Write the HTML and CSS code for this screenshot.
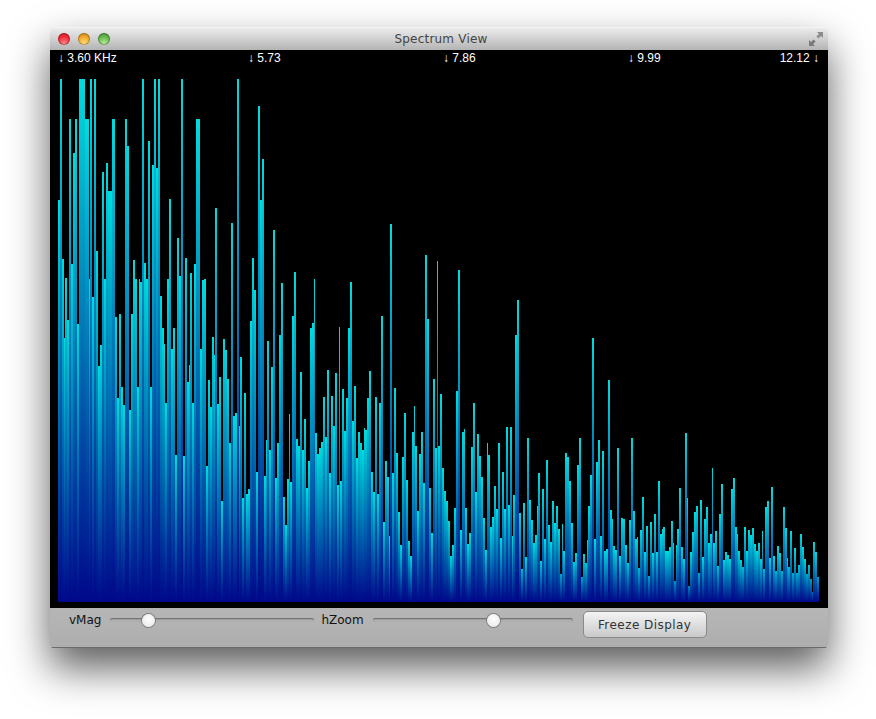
FILE: index.html
```html
<!DOCTYPE html>
<html lang="en">
<head>
    <meta charset="UTF-8">
    <meta name="viewport" content="width=device-width, initial-scale=1.0">
    <title>Spectrum View</title>
    <link rel="stylesheet" href="styles.css">
</head>
<body>
    <div class="window">
        <header class="titlebar">
            <div class="lights">
                <span class="light red"></span>
                <span class="light yellow"></span>
                <span class="light green"></span>
            </div>
            <h1>Spectrum View</h1>
            <svg class="fullscreen" width="16" height="16" viewBox="0 0 16 16">
                <path d="M9 1h6v6l-2-2-2.6 2.6-2-2L11 3z" fill="#8c8c8c"/>
                <path d="M1 15V9l2 2 2.6-2.6 2 2L5 13l2 2z" fill="#7a7a7a"/>
            </svg>
        </header>

        <div class="scope">
            <div class="axis">
                <span>↓ 3.60 KHz</span>
                <span>↓ 5.73</span>
                <span>↓ 7.86</span>
                <span>↓ 9.99</span>
                <span class="axis-end">12.12 ↓</span>
            </div>
            <canvas id="spectrum" width="762" height="532"></canvas>
        </div>

        <div class="controls">
            <label class="vmag" for="vMag">vMag</label>
            <input class="slider vmag-slider" type="range" id="vMag" min="0" max="100" step="0.1" value="16.5">
            <label class="hzoom" for="hZoom">hZoom</label>
            <input class="slider hzoom-slider" type="range" id="hZoom" min="0" max="100" step="0.1" value="61.2">
            <button class="freeze">Freeze Display</button>
        </div>
    </div>

    <script src="script.js"></script>
</body>
</html>
```

FILE: styles.css
```css
html, body {
    height: 100%;
}

body {
    margin: 0;
    padding: 27px 0 0 50px;
    box-sizing: border-box;
    background-color: #ffffff;
    font-family: 'DejaVu Sans', sans-serif;
}

.window {
    width: 778px;
    height: 621px;
    display: flex;
    flex-direction: column;
    border-radius: 5px 5px 3px 3px;
    overflow: hidden;
    box-shadow: 0 20px 40px rgba(0, 0, 0, 0.64);
}

.titlebar {
    height: 23px;
    flex: none;
    display: grid;
    grid-template-columns: 1fr auto 1fr;
    align-items: center;
    padding: 0 4px 0 8px;
    background: linear-gradient(#ececec, #b4b4b4);
    border-top: 1px solid #f4f4f4;
    box-sizing: border-box;
}

.titlebar h1 {
    margin: 0;
    font-size: 12px;
    font-weight: normal;
    letter-spacing: 0.2px;
    color: #444;
}

.fullscreen {
    justify-self: end;
}

.lights {
    display: flex;
    gap: 8px;
}

.light {
    width: 12px;
    height: 12px;
    border-radius: 50%;
    box-shadow: inset 0 0 0 1px rgba(0, 0, 0, 0.25);
}

.red {
    background: radial-gradient(circle at 50% 85%, #ff8a8a, #ee2a38 55%, #c0141f);
}

.yellow {
    background: radial-gradient(circle at 50% 85%, #ffdc80, #f0a628 55%, #bd7a10);
}

.green {
    background: radial-gradient(circle at 50% 85%, #b6ec98, #67b64e 55%, #3f8a2e);
}

.scope {
    flex: 1;
    padding: 0 8px 6px;
    background-color: #000;
    display: flex;
    flex-direction: column;
}

.axis {
    height: 20px;
    display: grid;
    grid-template-columns: 190px 195px 185px 1fr 1fr;
    color: #fff;
    font-family: 'Liberation Sans', sans-serif;
    font-size: 12px;
    line-height: 16px;
}

.axis-end {
    grid-column: 5;
    justify-self: end;
    margin-right: 1px;
}

#spectrum {
    display: block;
    margin-top: auto;
    filter: blur(0.4px);
}

.controls {
    height: 40px;
    flex: none;
    box-sizing: border-box;
    padding-bottom: 15px;
    display: flex;
    align-items: center;
    background: linear-gradient(#b6b6b6, #aeaeae);
    border-bottom: 1px solid #6a6a6a;
    font-size: 12px;
    color: #111;
}

.vmag {
    margin-left: 19px;
}

.hzoom {
    margin-left: 7px;
}

.slider {
    -webkit-appearance: none;
    appearance: none;
    height: 13px;
    margin: 0 0 0 9px;
    background: transparent;
}

.slider::-webkit-slider-runnable-track {
    height: 4px;
    border-radius: 2px;
    background: linear-gradient(#7c7c7c, #d0d0d0);
    box-shadow: inset 0 0 0 1px rgba(0, 0, 0, 0.12);
}

.slider::-webkit-slider-thumb {
    -webkit-appearance: none;
    width: 13px;
    height: 13px;
    margin-top: -4.5px;
    border-radius: 50%;
    background: radial-gradient(circle at 50% 40%, #ffffff, #e4e4e4);
    box-shadow: 0 0 0 1px #7e7e7e;
}

.vmag-slider {
    width: 204px;
}

.hzoom-slider {
    width: 200px;
}

.freeze {
    width: 124px;
    height: 27px;
    flex: none;
    margin: 9px 0 0 10px;
    padding: 0;
    border: 1px solid #8a8a8a;
    border-radius: 5px;
    background: linear-gradient(#f4f4f4, #c9c9c9);
    font-family: inherit;
    font-size: 12px;
    letter-spacing: 0.45px;
    color: #333;
}
```

FILE: script.js
```js
// top y of each bar on screen, left to right. negative = a 1px wide bar, others are 2px
const bars = [
    200,79,259,-338,278,320,119,264,153,119,324,79,79,79,119,119,-279,79,297,79,251,366,345,172,279,163,191,191,119,-119,
    317,398,314,387,405,119,146,410,314,260,279,387,-279,282,79,263,279,141,387,165,79,168,79,296,328,-344,403,279,199,349,
    328,455,238,276,79,456,258,382,-365,273,403,264,119,119,349,280,279,466,380,407,
    337,-355,208,404,377,501,339,350,379,443,223,416,413,79,-426,357,498,393,494,489,321,258,290,472,106,200,159,476,-440,341,
    450,367,230,478,443,335,283,497,525,479,-414,482,316,272,439,446,372,450,419,488,461,328,323,-279,433,454,448,442,397,437,
    370,473,396,426,373,485,-327,481,389,431,398,328,282,421,386,458,432,443,450,-428,-430,
    -430,398,371,472,492,397,494,403,316,522,461,477,-536,224,473,388,453,512,545,457,413,480,541,556,432,-406,446,511,454,432,
    483,255,319,488,533,379,448,-261,446,394,468,491,501,521,556,545,508,391,270,530,432,-429,508,544,533,447,403,492,434,456,
    477,518,550,-443,455,527,517,486,509,443,538,472,509,427,505,427,-536,495,335,300,-513,
    -513,569,503,557,438,500,520,543,535,-506,473,561,489,539,460,525,542,501,523,506,529,574,-524,551,453,457,481,523,562,553,
    465,438,577,554,563,-540,506,475,338,539,462,440,536,451,551,549,380,510,-519,546,550,448,556,518,519,545,563,520,438,511,
    539,-537,568,530,497,552,526,576,522,553,514,552,481,534,-529,527,551,551,547,521,-543,
    581,-545,529,488,547,559,433,-498,586,552,532,512,506,573,500,557,519,507,543,534,-468,543,531,566,514,484,560,552,555,559,
    489,478,527,-534,551,560,567,527,551,530,535,528,544,551,543,559,-531,569,507,501,558,487,556,571,546,553,571,507,528,-558,
    567,531,573,548,573,565,534,547,559,574,565,579,-592,542,552,577
];

const canvas = document.getElementById("spectrum");
const ctx = canvas.getContext("2d");
const bottom = 602;

let x = 0;
bars.forEach((bar) => {
    const top = Math.abs(bar);
    const width = bar < 0 ? 1 : 2;
    const height = bottom - top;

    // very short bars never reach full cyan
    const t = Math.min(1, height / 45);
    const gradient = ctx.createLinearGradient(0, canvas.height - height, 0, canvas.height);
    gradient.addColorStop(0, `rgb(0, ${Math.round(90 + 130 * t)}, ${Math.round(175 + 47 * t)})`);
    gradient.addColorStop(1, "#00088a");

    ctx.fillStyle = gradient;
    ctx.fillRect(x, canvas.height - height, width, height);
    x += width;
});
```
